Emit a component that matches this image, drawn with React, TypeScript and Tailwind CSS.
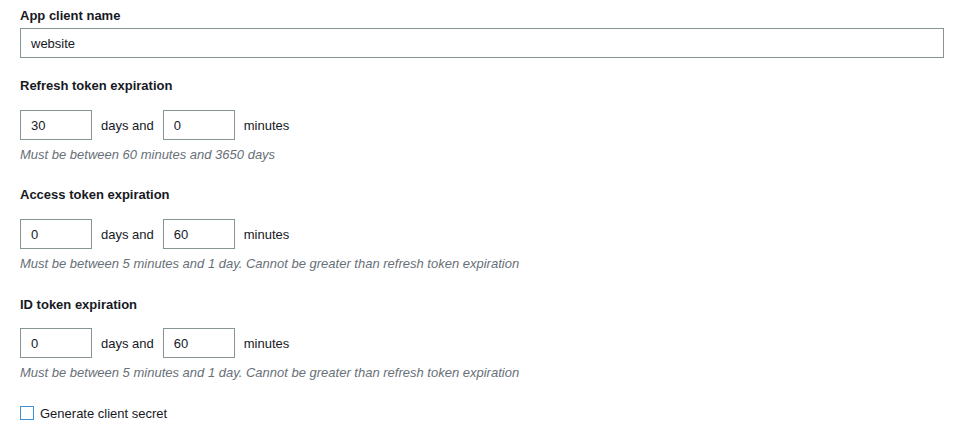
const font = { fontFamily: '"Liberation Sans", Arial, sans-serif' };

function Label({ children, className = "" }: { children: React.ReactNode; className?: string }) {
  return <div className={`text-[13px] font-bold leading-5 text-[#16191f] ${className}`}>{children}</div>;
}

function Expiration({ title, days, minutes, hint, className = "", gap = "mt-[14px]" }: { title: string; days: string; minutes: string; hint: string; className?: string; gap?: string }) {
  return (
    <div className={className}>
      <Label>{title}</Label>
      <div className={`${gap} flex items-center text-[13px] text-[#16191f]`}>
        <input
          defaultValue={days}
          className="h-[30px] w-[72px] border border-[#879596] px-[10px] text-[13px] text-[#16191f] outline-none"
        />
        <span className="ml-[9px] mr-[9px] pt-[2px]">days and</span>
        <input
          defaultValue={minutes}
          className="h-[30px] w-[72px] border border-[#879596] px-[10px] text-[13px] text-[#16191f] outline-none"
        />
        <span className="ml-[9px] pt-[2px]">minutes</span>
      </div>
      <div className="mt-[5px] text-[13px] italic leading-5 text-[#687078]">{hint}</div>
    </div>
  );
}

export default function App() {
  return (
    <div style={font} className="h-[428px] w-[956px] bg-white pl-[20px] pr-[12px] pt-[6px]">
      <Label>App client name</Label>
      <input
        defaultValue="website"
        className="mt-[2px] h-[30px] w-full border border-[#879596] px-[10px] text-[13px] text-[#16191f] outline-none"
      />
      <Expiration
        className="mt-[18px]"
        title="Refresh token expiration"
        days="30"
        minutes="0"
        hint="Must be between 60 minutes and 3650 days"
      />
      <Expiration
        className="mt-[20px]"
        title="Access token expiration"
        days="0"
        minutes="60"
        hint="Must be between 5 minutes and 1 day. Cannot be greater than refresh token expiration"
      />
      <Expiration
        className="mt-[21px]"
        gap="mt-[13px]"
        title="ID token expiration"
        days="0"
        minutes="60"
        hint="Must be between 5 minutes and 1 day. Cannot be greater than refresh token expiration"
      />
      <label className="mt-[20px] flex items-center text-[13px] text-[#16191f]">
        <span className="box-border inline-block h-[14px] w-[14px] border border-[#3d8fd6] bg-white" />
        <span className="ml-[6px] pt-[1px]">Generate client secret</span>
      </label>
    </div>
  );
}
